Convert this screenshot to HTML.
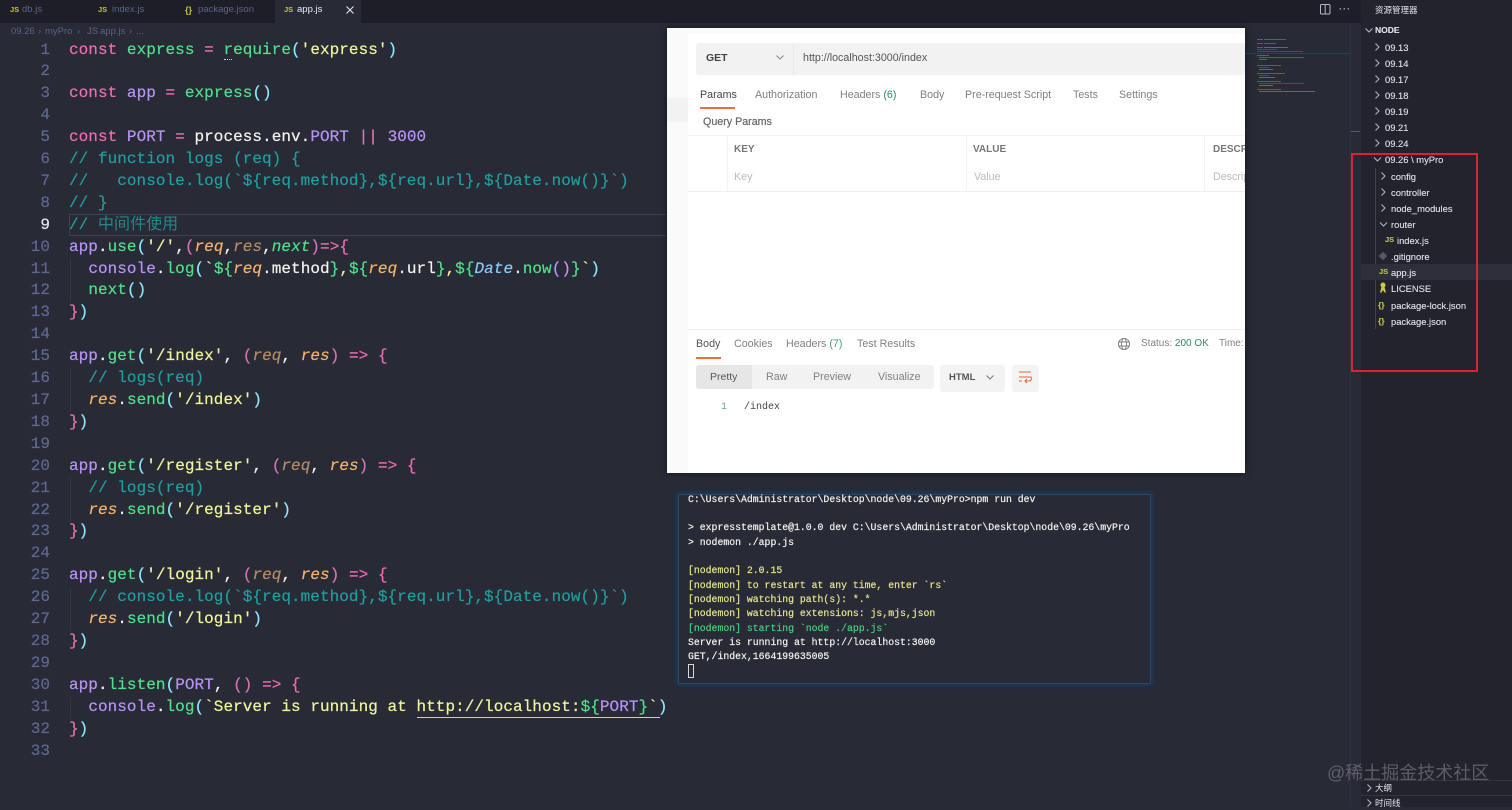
<!DOCTYPE html>
<html><head><meta charset="utf-8">
<style>
html,body{margin:0;padding:0;width:1512px;height:807px;overflow:hidden;background:#282a36}
*{box-sizing:border-box}
.a{position:absolute;white-space:pre}
#code,#nums{position:absolute;top:39.5px;margin:0;font:16px/21.9px "Liberation Mono","Noto Sans CJK SC",monospace;white-space:pre;-webkit-text-stroke:.2px}
#code{left:69px;letter-spacing:.05px;color:#f8f8f2}
#nums{left:20px;width:30px;text-align:right;color:#5f6793}
.k{color:#ef6db0}.g{color:#50e08a}.y{color:#f1f59a}.p{color:#b794f6}.w{color:#f3f3ee}.c{color:#1f9f9f}
.o{color:#f5b26b;font-style:italic}.od{color:#b58c63;font-style:italic}.gi{color:#50e08a;font-style:italic}.b{color:#8be9fd}.m{color:#d675b0}.i{color:#8cc8f5;font-style:italic}.n{color:#bd93f9}
.tab{position:absolute;top:0;height:23px;font:9.5px/20px "Liberation Sans",sans-serif;color:#5d6488;white-space:pre}
.js{color:#c4c04a;font:bold 7.5px "Liberation Sans",sans-serif}
.pm{font-family:"Liberation Sans",sans-serif;font-size:10.7px;color:#808080}
.t{color:#f2f2ee;font:9.82px/14.35px "Liberation Mono",monospace;-webkit-text-stroke:.2px}
.tr{position:absolute;font:9.4px/16px "Liberation Sans",sans-serif;color:#e3e5ea;white-space:pre;-webkit-text-stroke:.1px}
.ch{position:absolute;fill:none;stroke:#b4b8c2;stroke-width:1}
.bc{position:absolute;top:25px;font:9.5px/13px "Liberation Sans",sans-serif;color:#5a6285;white-space:pre}
</style></head><body>

<!-- Tab bar -->
<div class="a" style="left:0;top:0;width:1361px;height:23px;background:#1d1e27"></div>
<div class="a" style="left:275px;top:0;width:86px;height:23px;background:#282a36"></div>
<div class="tab js" style="left:10px;line-height:20px">JS</div><div class="tab" style="left:22px">db.js</div>
<div class="tab js" style="left:98px;line-height:20px">JS</div><div class="tab" style="left:112px">index.js</div>
<div class="tab js" style="left:185px;line-height:20px;font-size:9px">{}</div><div class="tab" style="left:198px">package.json</div>
<div class="tab js" style="left:284px;line-height:20px">JS</div><div class="tab" style="left:297px;color:#e9eaf0">app.js</div>
<svg class="a" style="left:345px;top:5px" width="10" height="10"><path d="M1.5 1.5l7 7M8.500 1.5l-7 7" stroke="#e4e4e8" stroke-width="1.100"/></svg>
<svg class="a" style="left:1319px;top:3px" width="13" height="13"><rect x="1.500" y="1.500" width="9.500" height="9.500" rx="1" fill="none" stroke="#b5b8c4"/><path d="M6.200 1.500v9.500" stroke="#b5b8c4"/></svg>
<div class="a" style="left:1339px;top:3px;font:bold 9px/12px 'Liberation Sans',sans-serif;color:#aeb2bf;letter-spacing:1px">···</div>

<!-- Breadcrumb -->
<div class="bc" style="left:11px">09.26</div><div class="bc" style="left:38px">&#8250;</div>
<div class="bc" style="left:45px">myPro</div><div class="bc" style="left:77px">&#8250;</div>
<div class="bc js" style="left:87px;line-height:13px">JS</div><div class="bc" style="left:100px">app.js</div>
<div class="bc" style="left:129px">&#8250;</div><div class="bc" style="left:136px">...</div>

<!-- Line 9 highlight -->
<div class="a" style="left:69px;top:214px;width:597px;height:22px;border:1px solid #3e4150;border-right:0"></div>
<!-- indent guides -->
<div class="a" style="left:70px;top:258px;width:1px;height:44px;background:#343644"></div>
<div class="a" style="left:70px;top:368px;width:1px;height:44px;background:#343644"></div>
<div class="a" style="left:70px;top:478px;width:1px;height:44px;background:#343644"></div>
<div class="a" style="left:70px;top:587px;width:1px;height:44px;background:#343644"></div>
<div class="a" style="left:70px;top:697px;width:1px;height:22px;background:#343644"></div>

<pre id="nums">1
2
3
4
5
6
7
8
<span style="color:#e6e6e6">9</span>
10
11
12
13
14
15
16
17
18
19
20
21
22
23
24
25
26
27
28
29
30
31
32
33</pre>

<pre id="code"><span class="k">const</span> <span class="g">express</span> <span class="k">=</span> <span class="g">require</span><span class="b">(</span><span class="y">'express'</span><span class="b">)</span>

<span class="k">const</span> <span class="p">app</span> <span class="k">=</span> <span class="g">express</span><span class="b">()</span>

<span class="k">const</span> <span class="p">PORT</span> <span class="k">=</span> <span class="w">process</span><span class="w">.env.</span><span class="p">PORT</span> <span class="k">||</span> <span class="n">3000</span>
<span class="c">// function logs (req) {</span>
<span class="c">//   console.log(`${req.method},${req.url},${Date.now()}`)</span>
<span class="c">// }</span>
<span class="c">// <span style="color:#23888a;-webkit-text-stroke:0;font-weight:normal">中间件使用</span></span>
<span class="p">app</span><span class="w">.</span><span class="g">use</span><span class="b">(</span><span class="y">'/'</span><span class="w">,</span><span class="m">(</span><span class="o">req</span><span class="w">,</span><span class="od">res</span><span class="w">,</span><span class="gi">next</span><span class="m">)</span><span class="k">=&gt;{</span>
  <span class="p">console</span><span class="w">.</span><span class="g">log</span><span class="b">(</span><span class="y">`</span><span class="g">${</span><span class="o">req</span><span class="w">.method</span><span class="g">}</span><span class="y">,</span><span class="g">${</span><span class="o">req</span><span class="w">.url</span><span class="g">}</span><span class="y">,</span><span class="g">${</span><span class="i">Date</span><span class="w">.</span><span class="g">now</span><span class="n">()</span><span class="g">}</span><span class="y">`</span><span class="b">)</span>
  <span class="g">next</span><span class="b">()</span>
<span class="k">}</span><span class="b">)</span>

<span class="p">app</span><span class="w">.</span><span class="g">get</span><span class="b">(</span><span class="y">'/index'</span><span class="w">,</span> <span class="m">(</span><span class="od">req</span><span class="w">,</span> <span class="o">res</span><span class="m">)</span> <span class="k">=&gt; {</span>
  <span class="c">// logs(req)</span>
  <span class="o">res</span><span class="w">.</span><span class="g">send</span><span class="b">(</span><span class="y">'/index'</span><span class="b">)</span>
<span class="k">}</span><span class="b">)</span>

<span class="p">app</span><span class="w">.</span><span class="g">get</span><span class="b">(</span><span class="y">'/register'</span><span class="w">,</span> <span class="m">(</span><span class="od">req</span><span class="w">,</span> <span class="o">res</span><span class="m">)</span> <span class="k">=&gt; {</span>
  <span class="c">// logs(req)</span>
  <span class="o">res</span><span class="w">.</span><span class="g">send</span><span class="b">(</span><span class="y">'/register'</span><span class="b">)</span>
<span class="k">}</span><span class="b">)</span>

<span class="p">app</span><span class="w">.</span><span class="g">get</span><span class="b">(</span><span class="y">'/login'</span><span class="w">,</span> <span class="m">(</span><span class="od">req</span><span class="w">,</span> <span class="o">res</span><span class="m">)</span> <span class="k">=&gt; {</span>
  <span class="c">// console.log(`${req.method},${req.url},${Date.now()}`)</span>
  <span class="o">res</span><span class="w">.</span><span class="g">send</span><span class="b">(</span><span class="y">'/login'</span><span class="b">)</span>
<span class="k">}</span><span class="b">)</span>

<span class="p">app</span><span class="w">.</span><span class="g">listen</span><span class="b">(</span><span class="p">PORT</span><span class="w">,</span> <span class="m">()</span> <span class="k">=&gt; {</span>
  <span class="p">console</span><span class="w">.</span><span class="g">log</span><span class="b">(</span><span class="y">`Server is running at http://localhost:</span><span class="g">${</span><span class="p">PORT</span><span class="g">}</span><span class="y">`</span><span class="b">)</span>
<span class="k">}</span><span class="b">)</span>
</pre>
<div class="a" style="left:417px;top:717px;width:243px;height:1px;background:#d6d87a"></div>
<div class="a" style="left:224px;top:59px;width:8px;height:1px;border-top:1px dotted #cfcfcf"></div>

<!-- Postman -->
<div class="a" style="left:667px;top:28px;width:578px;height:445px;background:#fff;box-shadow:0 0 6px rgba(0,0,0,.55);overflow:hidden">
  <div class="a" style="left:0;top:0;width:21px;height:445px;background:#fafafa"></div>
  <div class="a" style="left:0;top:70px;width:21px;height:24px;background:#f2f2f2"></div>
  <div class="a" style="left:21px;top:0;width:557px;height:6px;background:#fafafa"></div>
  <div class="a" style="left:29px;top:15px;width:549px;height:32px;background:#f2f2f2;border-radius:3px"></div>
  <div class="a" style="left:126px;top:15px;width:1px;height:32px;background:#e9e9e9"></div>
  <div class="a pm" style="left:39px;top:24px;font-weight:bold;color:#444;font-size:10.5px">GET</div>
  <svg class="a" style="left:108px;top:26px" width="10" height="8"><path d="M1.500 1.500l3.500 3.500 3.500-3.500" fill="none" stroke="#888"/></svg>
  <div class="a pm" style="left:136px;top:24px;color:#555">http://localhost:3000/index</div>

  <div class="a pm" style="left:33px;top:61px;color:#444">Params</div>
  <div class="a" style="left:33px;top:79px;width:35px;height:2px;background:#f26b3a"></div>
  <div class="a pm" style="left:88px;top:61px">Authorization</div>
  <div class="a pm" style="left:173px;top:61px">Headers <span style="color:#2f8a5f">(6)</span></div>
  <div class="a pm" style="left:253px;top:61px">Body</div>
  <div class="a pm" style="left:298px;top:61px">Pre-request Script</div>
  <div class="a pm" style="left:406px;top:61px">Tests</div>
  <div class="a pm" style="left:452px;top:61px">Settings</div>
  <div class="a pm" style="left:36px;top:88px;color:#666;font-size:10.7px;-webkit-text-stroke:.2px">Query Params</div>

  <div class="a" style="left:21px;top:107px;width:557px;height:1px;background:#f4f4f4"></div>
  <div class="a" style="left:21px;top:163px;width:557px;height:1px;background:#efefef"></div>
  <div class="a" style="left:60px;top:107px;width:1px;height:56px;background:#f3f3f3"></div>
  <div class="a" style="left:299px;top:107px;width:1px;height:56px;background:#f3f3f3"></div>
  <div class="a" style="left:537px;top:107px;width:1px;height:56px;background:#f3f3f3"></div>
  <div class="a pm" style="left:67px;top:116px;color:#777;font-weight:bold;font-size:10px">KEY</div>
  <div class="a pm" style="left:306px;top:116px;color:#777;font-weight:bold;font-size:10px">VALUE</div>
  <div class="a pm" style="left:546px;top:116px;color:#777;font-weight:bold;font-size:10px">DESCR</div>
  <div class="a pm" style="left:67px;top:143px;color:#bbb">Key</div>
  <div class="a pm" style="left:307px;top:143px;color:#bbb">Value</div>
  <div class="a pm" style="left:546px;top:143px;color:#bbb">Descrip</div>

  <div class="a" style="left:21px;top:301px;width:557px;height:1px;background:#f0f0f0"></div>
  <div class="a pm" style="left:29px;top:310px;color:#555">Body</div>
  <div class="a" style="left:29px;top:329px;width:25px;height:2px;background:#f26b3a"></div>
  <div class="a pm" style="left:67px;top:310px">Cookies</div>
  <div class="a pm" style="left:119px;top:310px">Headers <span style="color:#3aa57a">(7)</span></div>
  <div class="a pm" style="left:190px;top:310px">Test Results</div>
  <svg class="a" style="left:450px;top:309px" width="14" height="14" fill="none" stroke="#7d7d7d" stroke-width=".9"><circle cx="7" cy="7" r="5.600"/><ellipse cx="7" cy="7" rx="2.500" ry="5.600"/><path d="M1.500 5h11M1.500 9h11"/></svg>
  <div class="a pm" style="left:474px;top:310px;font-size:10px">Status: <span style="color:#2f8a5f">200 OK</span></div>
  <div class="a pm" style="left:552px;top:310px;font-size:10px">Time:</div>

  <div class="a" style="left:29px;top:337px;width:238px;height:24px;background:#f2f2f2;border-radius:3px"></div>
  <div class="a" style="left:29px;top:337px;width:56px;height:24px;background:#e6e6e6;border-radius:3px 0 0 3px"></div>
  <div class="a pm" style="left:43px;top:343px;color:#555;font-size:10.5px">Pretty</div>
  <div class="a pm" style="left:99px;top:343px">Raw</div>
  <div class="a pm" style="left:146px;top:343px">Preview</div>
  <div class="a pm" style="left:211px;top:343px">Visualize</div>
  <div class="a" style="left:273px;top:337px;width:65px;height:27px;background:#f3f3f3;border-radius:3px"></div>
  <div class="a pm" style="left:282px;top:344px;color:#555;font-weight:bold;font-size:9.5px">HTML</div>
  <svg class="a" style="left:318px;top:346px" width="10" height="8"><path d="M1.500 1.500l3.500 3.500 3.500-3.500" fill="none" stroke="#777"/></svg>
  <div class="a" style="left:345px;top:337px;width:27px;height:27px;background:#f3f3f3;border-radius:3px"></div>
  <svg class="a" style="left:351px;top:342px" width="15" height="16" fill="none" stroke="#e0673c" stroke-width="1"><path d="M1 2h12M1 7h12c1 2 0 4-2 4H7M9 9l-2 2 2 2M1 11h3"/></svg>
  <div class="a" style="left:54px;top:373px;font:10px/14px 'Liberation Mono',monospace;color:#6aa59a">1</div>
  <div class="a" style="left:77px;top:373px;font:10px/14px 'Liberation Mono',monospace;color:#444">/index</div>
</div>

<!-- Terminal -->
<div class="a" style="left:678px;top:494px;width:473px;height:190px;background:#282a36;border:1px solid #1f4a72;box-shadow:0 0 5px 1px #1c3f63"></div>
<div class="a t" style="left:688px;top:492.500px"><span>C:\Users\Administrator\Desktop\node\09.26\myPro&gt;npm run dev</span>

<span>&gt; expresstemplate@1.0.0 dev C:\Users\Administrator\Desktop\node\09.26\myPro</span>
<span>&gt; nodemon ./app.js</span>

<span style="color:#e6e58c">[nodemon] 2.0.15</span>
<span style="color:#e6e58c">[nodemon] to restart at any time, enter `rs`</span>
<span style="color:#e6e58c">[nodemon] watching path(s): *.*</span>
<span style="color:#e6e58c">[nodemon] watching extensions: js,mjs,json</span>
<span style="color:#45d07c">[nodemon] starting `node ./app.js`</span>
Server is running at http://localhost:3000
GET,/index,1664199635005</div>
<div class="a" style="left:688px;top:664px;width:6px;height:14px;border:1px solid #d8d8d8"></div>

<!-- Minimap -->
<svg class="a" style="left:1245px;top:25px;opacity:.65" width="105" height="75">
  <g stroke-width="1">
  <path d="M12 14.500h6" stroke="#b05a88"/><path d="M19 14.500h22" stroke="#4a9a6a"/>
  <path d="M12 18.500h6M19 18.500h12" stroke="#806aaa"/>
  <path d="M12 22.500h6" stroke="#b05a88"/><path d="M19 22.500h24" stroke="#8a8a90"/>
  <path d="M12 24.500h20" stroke="#1f7a7a"/><path d="M12 26.500h46" stroke="#1f7a7a"/>
  <path d="M12 30.500h12" stroke="#4a9a6a"/><path d="M14 32.500h45" stroke="#5a8a60"/><path d="M14 34.500h8" stroke="#4a9a6a"/>
  <path d="M12 40.500h24" stroke="#807a60"/><path d="M14 42.500h10" stroke="#1f7a7a"/><path d="M14 44.500h14" stroke="#a08a60"/>
  <path d="M12 48.500h28" stroke="#807a60"/><path d="M14 50.500h10" stroke="#1f7a7a"/><path d="M14 52.500h16" stroke="#a08a60"/>
  <path d="M12 56.500h24" stroke="#807a60"/><path d="M14 58.500h45" stroke="#1f7a7a"/><path d="M14 60.500h14" stroke="#a08a60"/>
  <path d="M12 64.500h24" stroke="#807a60"/><path d="M14 66.500h56" stroke="#8a8a80"/>
  <path d="M0 28.500h105" stroke="#1f4f6a"/>
  </g>
</svg>
<div class="a" style="left:1350px;top:23px;width:1px;height:784px;background:#2f3140"></div>
<div class="a" style="left:1351px;top:131px;width:9px;height:1px;background:#565a66"></div>

<!-- Sidebar -->
<div class="a" style="left:1361px;top:0;width:151px;height:807px;background:#22232d"></div>
<div class="a" style="left:1375px;top:4px;font:8.5px/13px 'Liberation Sans','Noto Sans CJK SC',sans-serif;color:#e6e8ea">资源管理器</div>
<svg class="ch" style="left:1364px;top:27px" width="10" height="8"><path d="M1.500 1.500l3.500 3.500 3.500-3.500"/></svg>
<div class="tr" style="left:1375px;top:22px;font-weight:bold;font-size:8.5px">NODE</div>

<svg class="ch" style="left:1374px;top:43px" width="7" height="120"><path d="M1.500 0.500l3.500 3.500-3.500 3.500M1.500 16.500l3.500 3.500-3.500 3.500M1.500 32.500l3.500 3.500-3.500 3.500M1.500 48.500l3.500 3.500-3.500 3.500M1.500 64.500l3.500 3.500-3.500 3.500M1.500 80.500l3.500 3.500-3.500 3.500M1.500 96.500l3.500 3.500-3.500 3.500"/></svg>
<div class="tr" style="left:1385px;top:40px">09.13</div>
<div class="tr" style="left:1385px;top:56px">09.14</div>
<div class="tr" style="left:1385px;top:72px">09.17</div>
<div class="tr" style="left:1385px;top:88px">09.18</div>
<div class="tr" style="left:1385px;top:104px">09.19</div>
<div class="tr" style="left:1385px;top:120px">09.21</div>
<div class="tr" style="left:1385px;top:136px">09.24</div>
<svg class="ch" style="left:1373px;top:156px" width="10" height="7"><path d="M1 1.500l3.500 3.500 3.500-3.500"/></svg>
<div class="tr" style="left:1385px;top:152px">09.26 \ myPro</div>

<div class="a" style="left:1375px;top:168px;width:1px;height:161px;background:#3e404c"></div>
<div class="a" style="left:1361px;top:264px;width:151px;height:16px;background:#2d2f3a"></div>
<svg class="ch" style="left:1380px;top:172px" width="7" height="48"><path d="M1.500 0.500l3.500 3.500-3.500 3.500M1.500 16.500l3.500 3.500-3.500 3.500M1.500 32.500l3.500 3.500-3.500 3.500"/></svg>
<svg class="ch" style="left:1379px;top:221px" width="10" height="7"><path d="M1 1.500l3.500 3.500 3.500-3.500"/></svg>
<div class="tr" style="left:1391px;top:169px">config</div>
<div class="tr" style="left:1391px;top:185px">controller</div>
<div class="tr" style="left:1391px;top:201px">node_modules</div>
<div class="tr" style="left:1391px;top:217px">router</div>
<div class="tr" style="left:1385px;top:232px;font:bold 7.5px/16px 'Liberation Sans',sans-serif;color:#c4c04a">JS</div>
<div class="tr" style="left:1397px;top:233px">index.js</div>
<div class="a" style="left:1380px;top:253px;width:6px;height:6px;background:#555866;transform:rotate(45deg)"></div>
<div class="tr" style="left:1391px;top:249px">.gitignore</div>
<div class="tr" style="left:1379px;top:264px;font:bold 7.5px/16px 'Liberation Sans',sans-serif;color:#c4c04a">JS</div>
<div class="tr" style="left:1391px;top:265px">app.js</div>
<svg class="a" style="left:1379px;top:282px" width="8" height="11"><path d="M4 .5a2.500 2.500 0 0 1 2.500 2.500c0 1-.5 1.700-1 2l1.500 5.500H5.500L4 8 2.500 10.500H1L2.500 5c-.5-.3-1-1-1-2A2.500 2.500 0 0 1 4 .5z" fill="#c9c84f"/></svg>
<div class="tr" style="left:1391px;top:281px">LICENSE</div>
<div class="tr" style="left:1378px;top:297px;font:bold 8.5px/16px 'Liberation Sans',sans-serif;color:#c4c04a">{}</div>
<div class="tr" style="left:1391px;top:298px">package-lock.json</div>
<div class="tr" style="left:1378px;top:313px;font:bold 8.5px/16px 'Liberation Sans',sans-serif;color:#c4c04a">{}</div>
<div class="tr" style="left:1391px;top:314px">package.json</div>

<!-- red box -->
<div class="a" style="left:1351px;top:153px;width:127px;height:219px;border:2px solid #d6262f"></div>

<!-- Bottom panels -->
<div class="a" style="left:1361px;top:780px;width:151px;height:1px;background:#33353f"></div>
<div class="a" style="left:1361px;top:795px;width:151px;height:1px;background:#33353f"></div>
<svg class="ch" style="left:1366px;top:784px" width="7" height="23"><path d="M1.500 0.500l3.500 3.500-3.500 3.500M1.500 15.500l3.500 3.500-3.500 3.500"/></svg>
<div class="a" style="left:1375px;top:782px;font:8.5px/13px 'Liberation Sans','Noto Sans CJK SC',sans-serif;color:#e6e8ea">大纲</div>
<div class="a" style="left:1375px;top:797px;font:8.5px/13px 'Liberation Sans','Noto Sans CJK SC',sans-serif;color:#e6e8ea">时间线</div>

<!-- watermark -->
<div class="a" style="left:1327px;top:761px;font:18px/24px 'Liberation Sans','Noto Sans CJK SC',sans-serif;color:rgba(150,150,155,.5)">@稀土掘金技术社区</div>
</body></html>
